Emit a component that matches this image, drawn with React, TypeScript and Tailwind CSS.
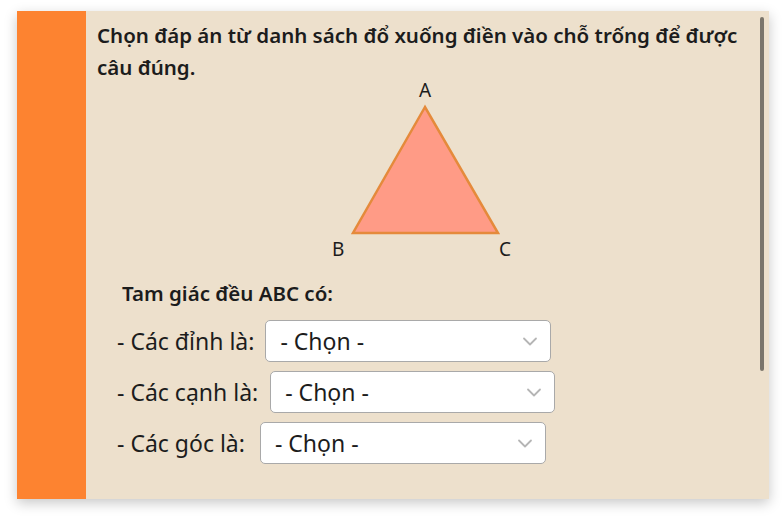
import React from "react";

const rows = [
  { label: "- Các đỉnh là:", ml: "ml-[11px]", w: "w-[286px]" },
  { label: "- Các cạnh là:", ml: "ml-[12px]", w: "w-[285px]" },
  { label: "- Các góc là:", ml: "ml-[15px]", w: "w-[286px]" },
];

const Chevron = () => (
  <svg className="w-[16px] h-[16px] text-[#b5b5b5]" viewBox="0 0 16 16" fill="none" stroke="currentColor">
    <path d="M2 5.5l6 6 6-6" strokeWidth={1.8} strokeLinecap="round" strokeLinejoin="round" />
  </svg>
);

const App = () => {
  return (
    <div className="w-[784px] h-[521px] bg-white pt-[11px] pl-[17px]" style={{ fontFamily: '"Noto Sans", "Open Sans", sans-serif' }}>
      <div className="flex w-[752px] h-[488px] bg-[#ede0cc] shadow-[0_4px_12px_rgba(0,0,0,0.22)]">
        <div className="w-[69px] shrink-0 bg-[#fd8330]" />
        <div className="relative flex-1 pl-[11px] pt-[8px] text-[#1c1c1c]">
          <div className="text-[20.5px] font-semibold leading-[32px]">
            <p>Chọn đáp án từ danh sách đổ xuống điền vào chỗ trống để được</p>
            <p className="w-fit">câu đúng.</p>
          </div>

          {/* triangle figure */}
          <div className="relative w-[200px] h-[185px] ml-[232px]">
            <span className="absolute left-[90px] top-0 text-[19px] leading-[14px]">A</span>
            <svg className="absolute left-0 top-0" width="200" height="185" viewBox="0 0 200 185">
              <polygon points="96,24 24,150 169,150" fill="#ff9b86" stroke="#e58a3b" strokeWidth={2.5} strokeLinejoin="miter" />
            </svg>
            <span className="absolute left-[3px] top-[159px] text-[19px] leading-[14px]">B</span>
            <span className="absolute left-[170px] top-[159px] text-[19px] leading-[14px]">C</span>
          </div>

          <p className="ml-[25px] mt-[10px] text-[20.5px] font-semibold leading-[30px]">Tam giác đều ABC có:</p>

          <div className="mt-[12px] flex flex-col gap-[9px] ml-[20px]">
            {rows.map((r) => (
              <div key={r.label} className="flex items-center h-[42px]">
                <span className="text-[23px] leading-[30px]">{r.label}</span>
                <div className={`${r.ml} ${r.w} h-[42px] flex items-center justify-between bg-white border border-[#a9a9a9] rounded-[5px] pl-[14px] pr-[12px]`}>
                  <span className="text-[23px] leading-[30px]">- Chọn -</span>
                  <Chevron />
                </div>
              </div>
            ))}
          </div>

          <div className="absolute right-[5px] top-[6px] w-[4px] h-[354px] rounded-full bg-[#7b756b]" />
        </div>
      </div>
    </div>
  );
};

export default App;
